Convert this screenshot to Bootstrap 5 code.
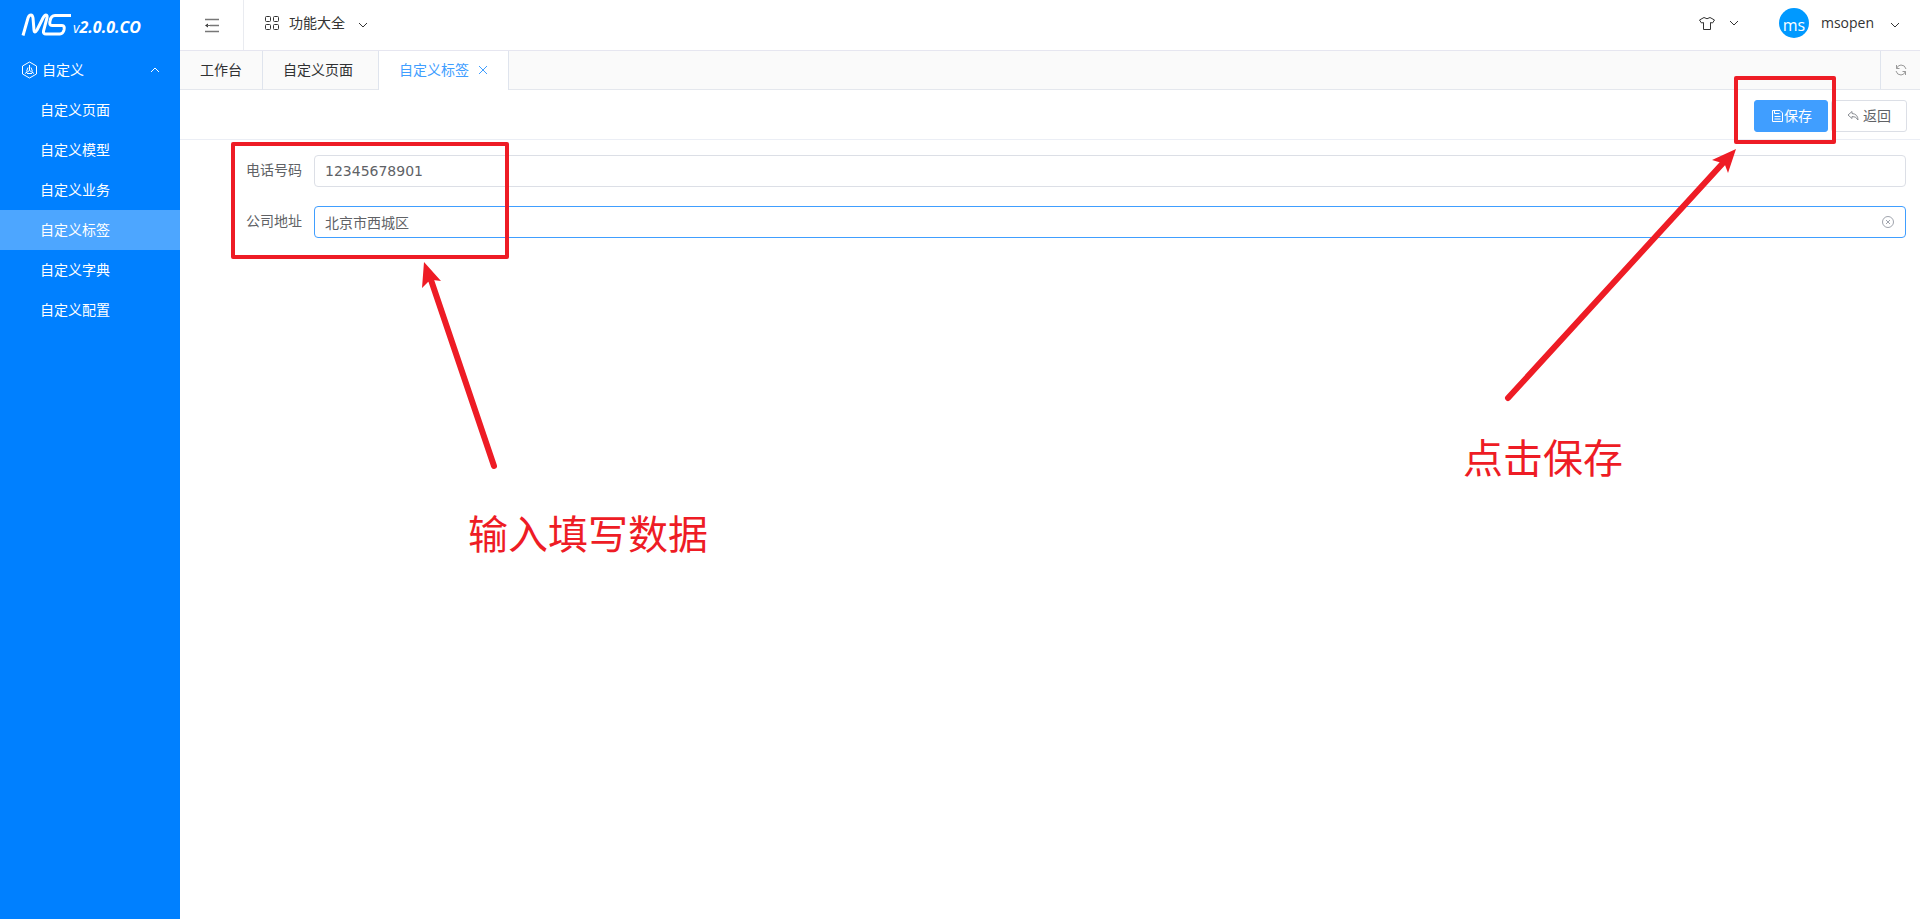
<!DOCTYPE html>
<html lang="zh-CN">
<head>
<meta charset="utf-8">
<meta name="viewport" content="width=device-width, initial-scale=1">
<title>自定义标签</title>
<link rel="stylesheet" href="https://cdn.jsdelivr.net/npm/bootstrap@5.3.0/dist/css/bootstrap.min.css">
<style>
  body { font-family: "Open Sans", "Noto Sans CJK SC", sans-serif; font-size: 14px; line-height: 20px; color: #333; background: #fff; }
  svg { flex: none; fill: none; stroke: currentColor; stroke-width: 1; }
  a { text-decoration: none; }
  .bare { background: none; border: 0; padding: 0; color: inherit; display: flex; align-items: center; }
  .sidebar { width: 180px; background: #0080ff; flex: none; }
  .brand-bar { height: 50px; padding: 0 0 2px 21px; }
  .brand-mark { stroke-width: 3; }
  .brand-ver { font-style: italic; font-size: 14px; margin: 7px 0 0 1px; }
  .brand-ver strong { font-size: 16px; }
  .sidebar a, .menu-title { color: #fff; height: 40px; padding: 0 21px; display: flex; align-items: center; width: 100%; }
  .sidebar .sub { padding-left: 40px; }
  .sidebar .sub.active { background: #4da6ff; }
  .topbar { height: 51px; border-bottom: 1px solid #e6e6f0; }
  .fold { width: 64px; border-right: 1px solid #e9ebf0; justify-content: center; color: #666; }
  .functions { margin-left: 20px; gap: 9px; }
  .theme { gap: 14px; margin-right: 40px; }
  .user { margin-right: 20px; gap: 12px; }
  .avatar { width: 30px; height: 30px; background: #0099ff; color: #fff; font-size: 16px; padding-top: 3px; }
  .tabs { height: 39px; background: #fafafa; border-bottom: 1px solid #e4e7ed; }
  .tab-item { height: 39px; padding: 0 20px 2px; border-right: 1px solid #dfe4ed; color: #303133; display: flex; align-items: center; }
  .tab-item.closed { padding-right: 25px; }
  .tab-item.active { background: #fff; color: #409eff; gap: 9px; }
  .refresh { width: 40px; border-left: 1px solid #dfe4ed; color: #999; justify-content: center; }
  .toolbar { height: 50px; border-bottom: 1px solid #ebeef5; padding: 2px 13px 0 0; gap: 3px; }
  .btn-tool { height: 32px; font-size: 14px; line-height: 20px; border-radius: 3px; padding: 0 15px; display: flex; align-items: center; border: 1px solid #dcdfe6; color: #606266; }
  .btn-save { background: #409eff; border-color: #409eff; color: #fff; }
  .data-form { padding: 15px 14px 0 12px; color: #606266; }
  .field { margin-bottom: 19px; }
  .field label { width: 122px; padding: 5px 12px 0 0; text-align: right; flex: none; }
  .field .form-control { height: 32px; font-family: "DejaVu Sans", "Noto Sans CJK SC", sans-serif; font-size: 14px; line-height: 20px; padding: 0 10px; border: 1px solid #dcdfe6; border-radius: 4px; color: #606266; box-shadow: none; }
  .field .form-control.current { border-color: #409eff; }
  .clear { right: 11px; top: 9px; color: #a0a4ad; }
  .mark-box { border: 4px solid #ee1c25; border-radius: 2px; pointer-events: none; }
  .note { color: #ee1c25; font-size: 40px; line-height: 48px; white-space: nowrap; }
  .arrow { fill: #ee1c25; stroke: #ee1c25; pointer-events: none; }
  .box-form { left: 51px; top: 142px; width: 278px; height: 117px; }
  .arrow-form { left: 240px; top: 260px; }
  .note-form { left: 288px; top: 510px; }
  .box-save { right: 84px; top: 76px; width: 102px; height: 68px; }
  .arrow-save { right: 180px; top: 147px; }
  .note-save { right: 297px; top: 434px; }
</style>
</head>
<body>
<div class="d-flex min-vh-100">
  <aside class="sidebar">
    <div class="brand-bar d-flex align-items-center text-white">
      <svg class="brand-mark" width="51" height="23" viewBox="0 0 51 23"><path d="M2 22.500L7 5Q8 2 10 2Q11.500 2 12 5L13 17Q13.500 21 16 17L22 5Q23.500 2 25 2Q26.500 2 26 5L22.500 18Q22 21 25 21H39Q42 21 43 17Q44 12.500 41 12.500H31Q28 12.500 29 8Q30 2.500 34 2.500H50"/></svg>
      <span class="brand-ver">v<strong>2.0.0.CO</strong></span>
    </div>
    <button class="bare menu-title px-3" type="button">
      <svg class="ms-1" width="18" height="18" viewBox="0 0 18 18"><path d="M9.500 1L16.500 5V13L9.500 17L2.500 13V5Z"/><path d="M9.500 4V9.500L5 12.500M9.500 9.500L14 12.500M8 6.500L6.500 10.500M11 6.500L12.500 10.500M7 12.500H12"/></svg>
      <span class="ms-1">自定义</span>
      <svg class="ms-auto me-1" width="10" height="6" viewBox="0 0 10 6"><path d="M1 5L5 1L9 5"/></svg>
    </button>
    <nav>
      <a class="sub" href="#">自定义页面</a>
      <a class="sub" href="#">自定义模型</a>
      <a class="sub" href="#">自定义业务</a>
      <a class="sub active" href="#" aria-current="page">自定义标签</a>
      <a class="sub" href="#">自定义字典</a>
      <a class="sub" href="#">自定义配置</a>
    </nav>
  </aside>

  <main class="flex-grow-1 position-relative">
    <header class="topbar d-flex align-items-stretch">
      <button class="bare fold" type="button" aria-label="折叠菜单">
        <svg width="14" height="15" viewBox="0 0 14 15"><path d="M0 1.500H14M5 7.500H14M0 13.500H14" stroke="#777" stroke-width="1.500"/><path d="M0 7.500L3 5.500V9.500Z" fill="#333" stroke="none"/><path d="M2 7.500H5"/></svg>
      </button>
      <button class="bare functions" type="button">
        <svg class="mb-1" width="16" height="16" viewBox="0 0 16 16"><rect x="1.500" y="1.500" width="5" height="5" rx="1"/><rect x="9.500" y="1.500" width="5" height="5" rx="1"/><rect x="1.500" y="9.500" width="5" height="5" rx="1"/><rect x="9.500" y="9.500" width="5" height="5" rx="1"/></svg>
        <span class="pb-1">功能大全</span>
        <svg class="ms-1" width="10" height="6" viewBox="0 0 10 6"><path d="M1 1L5 5L9 1"/></svg>
      </button>
      <button class="bare theme ms-auto pb-1" type="button" aria-label="主题">
        <svg width="16" height="15" viewBox="0 0 16 15"><path d="M5 1.500L.500 4L2.500 7L4.500 6.500V13.500H11.500V6.500L13.500 7L15.500 4L11 1.500Q8 4 5 1.500Z"/></svg>
        <svg width="10" height="6" viewBox="0 0 10 6"><path d="M1 1L5 5L9 1"/></svg>
      </button>
      <button class="bare user" type="button">
        <span class="avatar rounded-circle d-flex align-items-center justify-content-center mb-1">ms</span>
        <span class="pb-1 me-1">msopen</span>
        <svg width="10" height="6" viewBox="0 0 10 6"><path d="M1 1L5 5L9 1"/></svg>
      </button>
    </header>

    <div class="tabs d-flex">
      <a class="tab-item" href="#">工作台</a>
      <a class="tab-item closed" href="#">自定义页面</a>
      <a class="tab-item active" href="#">自定义标签
        <svg width="10" height="10" viewBox="0 0 10 10"><path d="M1 1L9 9M9 1L1 9"/></svg></a>
      <button class="bare refresh ms-auto" type="button" aria-label="刷新">
        <svg width="12" height="12" viewBox="0 0 12 12"><path d="M1.500 1V4.500H4.500M1.500 4.500Q3 1 6 1Q10 1 11 5M10.500 11V7.500H7.500M10.500 7.500Q9 11 6 11Q2 11 1 7"/></svg>
      </button>
    </div>

    <div class="toolbar d-flex align-items-center justify-content-end">
      <button class="btn btn-tool btn-save" type="button">
        <svg width="14" height="12" viewBox="0 0 14 12"><path d="M2.500 .500H10L12.500 3V11.500H2.500ZM4.500 .500V3.500H9.500M4.500 6.500H10.500M4.500 9H10.500"/></svg>保存</button>
      <button class="btn btn-tool" type="button">
        <svg class="me-1" width="12" height="10" viewBox="0 0 12 10"><path d="M5 .500L1 4L5 7.500V5.500Q9 5 11 9Q11 3 5 2.500Z" stroke="#8b8e94"/></svg>返回</button>
    </div>

    <form class="data-form">
      <div class="field d-flex">
        <label for="phone">电话号码</label>
        <input id="phone" class="form-control" type="text" value="12345678901">
      </div>
      <div class="field d-flex">
        <label for="address">公司地址</label>
        <div class="position-relative flex-grow-1">
          <input id="address" class="form-control current" type="text" value="北京市西城区">
          <button class="bare clear position-absolute" type="button" aria-label="清空">
            <svg width="14" height="14" viewBox="0 0 14 14"><circle cx="7" cy="7" r="5.500"/><path d="M5 5L9 9M9 5L5 9"/></svg>
          </button>
        </div>
      </div>
    </form>

    <div class="mark-box box-form position-absolute"></div>
    <svg class="arrow arrow-form position-absolute" width="80" height="210" viewBox="0 0 80 210"><path d="M4 2L21 21L13 20L8 22L2 28Z" stroke="none"/><path d="M11 20L74 206" stroke-width="6" stroke-linecap="round"/></svg>
    <div class="note note-form position-absolute">输入填写数据</div>

    <div class="mark-box box-save position-absolute"></div>
    <svg class="arrow arrow-save position-absolute" width="240" height="260" viewBox="0 0 240 260"><path d="M236 2L212 13L222 16L225 18L228 26Z" stroke="none"/><path d="M223 16L8 251" stroke-width="6" stroke-linecap="round"/></svg>
    <div class="note note-save position-absolute">点击保存</div>
  </main>
</div>
<script src="https://cdn.jsdelivr.net/npm/bootstrap@5.3.0/dist/js/bootstrap.bundle.min.js"></script>
</body>
</html>
